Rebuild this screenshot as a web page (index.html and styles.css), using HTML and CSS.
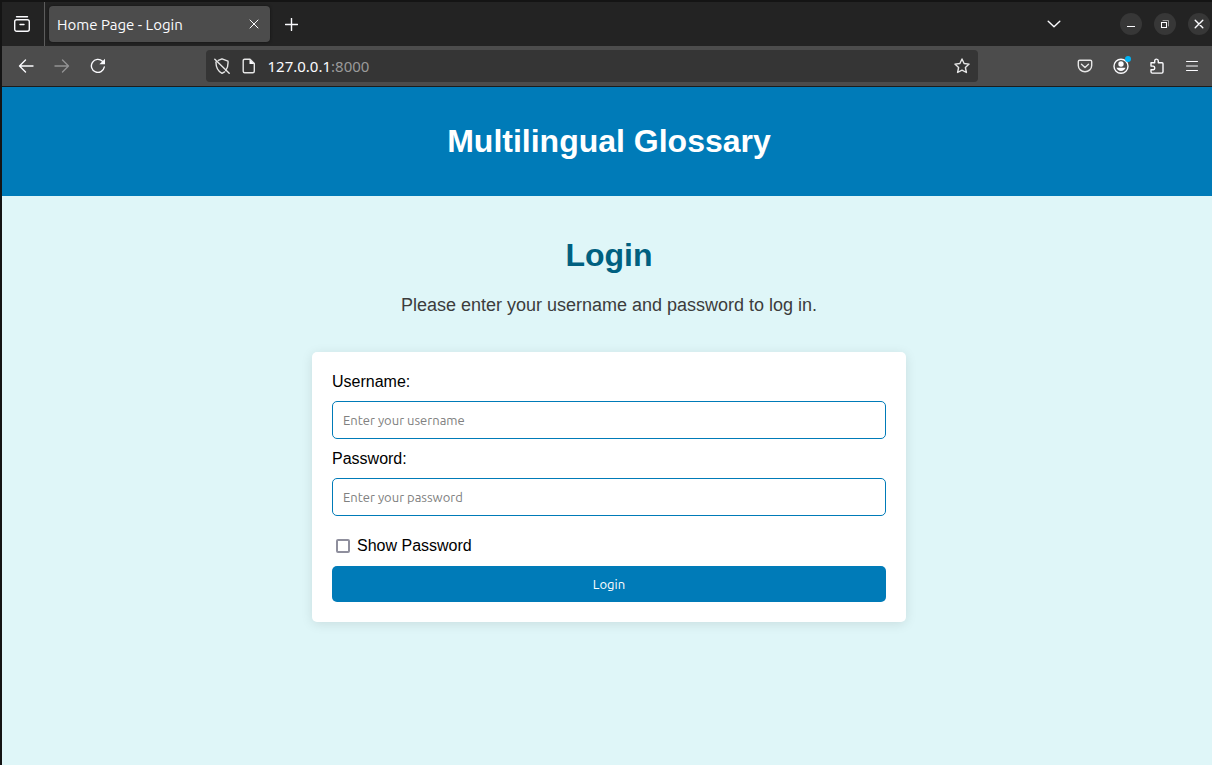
FILE: index.html
```html
<!DOCTYPE html>
<html lang="en">
<head>
<meta charset="utf-8">
<title>Home Page - Login</title>
<link rel="stylesheet" href="styles.css">
</head>
<body>
<div class="window">
  <div class="tab-strip">
    <button class="tool view-button" aria-label="Recent browsing">
      <svg width="18" height="18" viewBox="0 0 18 18"><path d="M3.5 1.7h11" /><rect x="1.7" y="4.7" width="14.6" height="11.6" rx="2"/><path d="M7 9.5h4"/></svg>
    </button>
    <div class="tab">
      <span class="tab-title">Home Page - Login</span>
      <button class="tool tab-close" aria-label="Close tab">
        <svg class="thin" width="10" height="10" viewBox="0 0 10 10"><path d="M1 1l8 8M9 1l-8 8"/></svg>
      </button>
    </div>
    <button class="tool new-tab" aria-label="New tab">
      <svg width="13" height="13" viewBox="0 0 13 13"><path d="M6.5.5v12M.5 6.5h12"/></svg>
    </button>
    <button class="tool list-tabs" aria-label="List all tabs">
      <svg width="14" height="8" viewBox="0 0 14 8"><path d="M1.2 1.2L7 6.8l5.800-5.600"/></svg>
    </button>
    <div class="window-buttons">
      <button class="round" aria-label="Minimize"><svg width="10" height="10" viewBox="0 0 10 10"><path class="crisp" d="M1 7.500h8"/></svg></button>
      <button class="round" aria-label="Restore"><svg class="thin" width="10" height="10" viewBox="0 0 10 10"><path class="crisp" d="M1.500 3.500h5v5h-5z"/><path class="faint" d="M3 1.500h5.500V7"/></svg></button>
      <button class="round" aria-label="Close"><svg width="10" height="10" viewBox="0 0 10 10"><path d="M1.200 1.200l7.600 7.600M8.800 1.200L1.200 8.800"/></svg></button>
    </div>
  </div>

  <div class="toolbar">
    <div class="nav-buttons">
      <button class="tool" aria-label="Back"><svg width="16" height="16" viewBox="0 0 16 16"><path d="M15 8H1.500M7.500 2L1.500 8l6 6"/></svg></button>
      <button class="tool" aria-label="Forward" disabled><svg width="16" height="16" viewBox="0 0 16 16"><path d="M1 8h13.500M8.500 2l6 6-6 6"/></svg></button>
      <button class="tool" aria-label="Reload"><svg width="16" height="16" viewBox="0 0 16 16"><path d="M14.300 9A6.500 6.500 0 1 1 12.500 3.300"/><path class="solid" d="M15 .8v5.400H9.400z"/></svg></button>
    </div>
    <div class="address">
      <svg class="soft" width="16" height="16" viewBox="0 0 16 16"><path d="M4.300 2.400L8 .8l6 2.400c.3 4.600-.6 7.200-2.300 9.300M10.600 13.900L8 15.300C4 13.300 2 10.200 1.900 4M.8 1.200l14.400 14"/></svg>
      <svg class="soft" width="16" height="16" viewBox="0 0 16 16"><path d="M3.700 1.200H9l4.300 4.300v7.800c0 .9-.6 1.500-1.500 1.500H3.700c-.9 0-1.500-.6-1.500-1.500V2.700c0-.9.6-1.500 1.500-1.500z"/><path class="solid" d="M8.500 1.200V6h4.800z"/></svg>
      <span class="url">127.0.0.1<span class="port">:8000</span></span>
      <button class="tool bookmark" aria-label="Bookmark this page"><svg class="soft" width="16" height="16" viewBox="0 0 16 16"><path d="M8 1l2.100 4.500 5 .6-3.700 3.400 1 5L8 12.100l-4.400 2.400 1-5L.9 6.100l5-.6z"/></svg></button>
    </div>
    <div class="actions">
      <button class="tool" aria-label="Save to Pocket"><svg class="soft" width="16" height="16" viewBox="0 0 16 16"><path d="M2.700 2.200h10.600c.8 0 1.400.6 1.400 1.400V7.500a6.700 6.200 0 0 1-13.400 0V3.600c0-.8.6-1.400 1.400-1.400z"/><path d="M4.500 6.200L8 9.400l3.500-3.200"/></svg></button>
      <button class="tool account" aria-label="Account"><svg width="16" height="16" viewBox="0 0 16 16"><circle cx="8" cy="8.300" r="7"/><circle class="solid" cx="8" cy="6" r="2.700"/><path class="solid" d="M3.500 9.800h9c-.5 2-2.300 3.200-4.500 3.200s-4-1.200-4.500-3.200z"/></svg><span class="dot"></span></button>
      <button class="tool" aria-label="Extensions"><svg width="16" height="16" viewBox="0 0 16 16"><path d="M2 4.700h3.700V2.900a1.800 1.800 0 0 1 3.600 0v1.800H13c.6 0 1 .4 1 1v8c0 .8-.5 1.400-1.300 1.400H3.300c-.8 0-1.300-.6-1.300-1.400v-1.900h2.300a1.900 1.900 0 0 0 0-3.700H2z"/></svg></button>
      <button class="tool" aria-label="Menu"><svg class="thin" width="14" height="14" viewBox="0 0 14 14"><path d="M1.500 2.500h11M1.500 7h11M1.500 11.500h11"/></svg></button>
    </div>
  </div>

  <div class="page">
    <header class="banner"><h1>Multilingual Glossary</h1></header>
    <main class="content">
      <h1 class="title">Login</h1>
      <p class="intro">Please enter your username and password to log in.</p>
      <form class="card">
        <label for="username">Username:</label>
        <input class="field" id="username" type="text" placeholder="Enter your username">
        <label for="password">Password:</label>
        <input class="field" id="password" type="password" placeholder="Enter your password">
        <div class="show">
          <input class="check" id="show" type="checkbox">
          <label for="show">Show Password</label>
        </div>
        <button class="submit" type="button">Login</button>
      </form>
    </main>
  </div>
</div>
</body>
</html>
```
FILE: styles.css
```css
* {
  box-sizing: border-box;
}

body {
  margin: 0;
  font-family: "Liberation Sans", Arial, sans-serif;
  font-size: 16px;
}

.window {
  display: flex;
  flex-direction: column;
  min-height: 100vh;
  border-top: 2px solid #141414;
  border-left: 2px solid #141414;
}

svg {
  display: block;
  fill: none;
  stroke: #fbfbfe;
  stroke-width: 1.4;
  stroke-linecap: round;
  stroke-linejoin: round;
}

.thin {
  stroke-width: 1;
}

.soft {
  stroke: #e6e6e6;
}

.faint {
  stroke: #999;
}

.crisp {
  shape-rendering: crispEdges;
  stroke-width: 1;
}

.solid {
  fill: #fbfbfe;
  stroke: none;
}

.tool,
.round {
  display: grid;
  place-items: center;
  flex: none;
  padding: 0;
  border: 0;
  background: none;
}

.tool:disabled {
  opacity: 0.4;
}

/* Tab strip */
.tab-strip {
  display: flex;
  align-items: center;
  height: 44px;
  background: #232323;
  font-family: Ubuntu, "Noto Sans", sans-serif;
}

.view-button {
  width: 43px;
  height: 44px;
  padding-right: 2px;
  border-right: 1px solid #5c5c5c;
}

.tab {
  display: flex;
  align-items: center;
  justify-content: space-between;
  width: 221px;
  height: 36px;
  margin-left: 4px;
  padding: 0 11px 0 8px;
  border-radius: 4px;
  background: #4c4c4c;
  box-shadow: 0 0 3px #111;
}

.tab-title {
  color: #fbfbfe;
  font-size: 15px;
}

.new-tab {
  margin-left: 15px;
}

.list-tabs {
  margin-left: auto;
}

.window-buttons {
  display: flex;
  gap: 12px;
  margin: 0 2px 0 59px;
}

.round {
  width: 22px;
  height: 22px;
  border-radius: 50%;
  background: #373737;
}

/* Navigation toolbar */
.toolbar {
  display: flex;
  align-items: center;
  justify-content: space-between;
  height: 41px;
  padding: 0 13px 0 16px;
  border-bottom: 1px solid #1c1c1c;
  background: #4c4c4c;
}

.nav-buttons,
.actions {
  display: flex;
  align-items: center;
  gap: 20px;
}

.address {
  display: flex;
  align-items: center;
  flex: 0 1 772px;
  gap: 11px;
  height: 32px;
  padding: 0 8px;
  border-radius: 4px;
  background: #353535;
}

.url {
  flex: 1;
  color: #fbfbfe;
  font-family: "Noto Sans", sans-serif;
  font-size: 15px;
  line-height: 20px;
}

.port {
  color: #9a9a9a;
}

.account {
  position: relative;
}

.dot {
  position: absolute;
  top: -2px;
  right: -2px;
  width: 6px;
  height: 6px;
  border-radius: 50%;
  background: #00b3f4;
}

/* Page */
.page {
  flex: 1;
  background: #dff6f8;
}

.banner {
  padding: 36px 0 36px 4px;
  background: #007bb8;
  color: #fff;
  text-align: center;
}

.banner h1,
.title {
  margin: 0;
  font-size: 32px;
  line-height: 37px;
}

.content {
  padding: 41px 20px 40px 24px;
  text-align: center;
}

.title {
  color: #006080;
}

.intro {
  margin: 19px 0 35px;
  color: #3c3c3c;
  font-size: 18px;
  line-height: 24px;
}

.card {
  display: flex;
  flex-direction: column;
  max-width: 594px;
  margin: 0 auto;
  padding: 20px;
  border-radius: 5px;
  background: #fff;
  box-shadow: 0 2px 12px rgba(0, 0, 0, 0.1);
  color: #000;
  line-height: 19px;
  text-align: left;
}

.field {
  width: 100%;
  height: 38px;
  margin: 10px 0;
  padding: 0 10px;
  border: 1px solid #007bb8;
  border-radius: 5px;
  background: #fff;
  font-family: Ubuntu, "Noto Sans", sans-serif;
  font-size: 13px;
}

.field::placeholder {
  color: #808080;
}

.show {
  display: flex;
  align-items: center;
  gap: 7px;
  margin: 10px 0 11px;
  padding-left: 4px;
}

.check {
  appearance: none;
  width: 14px;
  height: 14px;
  margin: 0;
  border: 2px solid #8f8f9d;
  border-radius: 2px;
  background: #fff;
}

.check:checked {
  background: #007bb8;
}

.submit {
  height: 36px;
  border: 0;
  border-radius: 5px;
  background: #007bb8;
  color: #fff;
  font-family: Ubuntu, "Noto Sans", sans-serif;
  font-size: 13px;
}
```
